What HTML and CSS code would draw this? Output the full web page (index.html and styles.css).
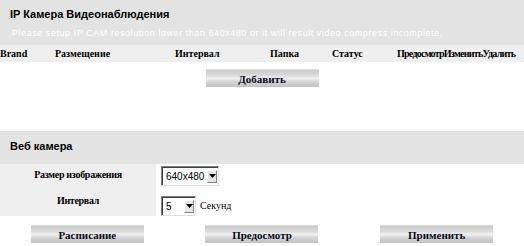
FILE: index.html
```html
<!DOCTYPE html>
<html lang="ru">
<head>
  <meta charset="UTF-8" />
  <title>IP Камера Видеонаблюдения</title>
  <link rel="stylesheet" href="styles.css">
</head>
<body>

  <div class="panel">
    <div class="panel-head">
      <h2>IP Камера Видеонаблюдения</h2>
      <p class="note">Please setup IP CAM resolution lower than 640x480 or it will result video compress incomplete.</p>
    </div>
    <div class="cam-head">
      <span>Brand</span>
      <span>Размещение</span>
      <span>Интервал</span>
      <span>Папка</span>
      <span>Статус</span>
      <span class="tight">Предосмотр</span>
      <span class="tight">Изменить</span>
      <span class="tight">Удалить</span>
    </div>
    <div class="actions one">
      <button class="btn">Добавить</button>
    </div>
  </div>

  <div class="panel webcam">
    <div class="panel-head short">
      <h2>Веб камера</h2>
    </div>
    <div class="form-grid">
      <div class="label">Размер изображения</div>
      <div class="field">
        <div class="select wide">
          <span class="value">640x480</span>
          <span class="arrow"><svg width="7" height="4" viewBox="0 0 7 4"><path d="M0 0h7L3.5 4z" fill="#000"/></svg></span>
        </div>
      </div>
      <div class="label">Интервал</div>
      <div class="field">
        <div class="select narrow">
          <span class="value">5</span>
          <span class="arrow"><svg width="7" height="4" viewBox="0 0 7 4"><path d="M0 0h7L3.5 4z" fill="#000"/></svg></span>
        </div>
        <span class="unit">Секунд</span>
      </div>
    </div>
    <div class="actions three">
      <button class="btn">Расписание</button>
      <button class="btn">Предосмотр</button>
      <button class="btn">Применить</button>
    </div>
  </div>

</body>
</html>
```

FILE: styles.css
```css
:root {
  --head: #e3e3e3;
  --row: #efefef;
  --text: #000;
}
* {
  margin: 0;
  padding: 0;
  box-sizing: border-box;
}
body {
  width: 524px;
  height: 246px;
  overflow: hidden;
  background: #fff;
  color: var(--text);
  font-family: 'Liberation Serif', serif;
}
.panel-head {
  background: var(--head);
  height: 45px;
  padding: 8px 10px 0;
}
.panel-head h2 {
  font-family: 'Liberation Sans', Arial, sans-serif;
  font-size: 11px;
  font-weight: 700;
  line-height: 13px;
}
.panel-head .note {
  color: #fff;
  font-family: 'Liberation Sans', Arial, sans-serif;
  font-size: 9px;
  letter-spacing: 0.55px;
  line-height: 11px;
  margin-top: 7px;
  padding-left: 2px;
  white-space: nowrap;
}
.panel-head.short {
  height: 33px;
  padding-top: 9px;
}
.cam-head {
  display: grid;
  grid-template-columns: 55px 120px 95px 62px 65px auto auto auto;
  justify-content: start;
  background: var(--row);
  height: 17px;
  font-size: 10px;
  font-weight: 700;
  line-height: 18px;
  white-space: nowrap;
}
.cam-head .tight {
  letter-spacing: -0.75px;
}
.actions {
  display: grid;
  justify-items: center;
}
.actions.one {
  margin-top: 7px;
}
.actions.three {
  grid-template-columns: 1fr 1fr 1fr;
  margin-top: 9px;
}
.btn {
  width: 113px;
  height: 18px;
  border: none;
  border-top: 1px solid #dcdcdc;
  background: linear-gradient(to bottom, #cbcbcb 0%, #dadada 30%, #f0f0f0 50%, #d4d4d4 70%, #c2c2c2 100%);
  font-family: 'Liberation Serif', serif;
  font-size: 11px;
  font-weight: 700;
  color: #0a0a1a;
  cursor: pointer;
}
.webcam {
  margin-top: 44px;
}
.form-grid {
  display: grid;
  grid-template-columns: 156px 1fr;
  grid-auto-rows: 26px;
}
.label {
  background: var(--row);
  font-size: 10px;
  font-weight: 700;
  letter-spacing: -0.3px;
  text-align: center;
  line-height: 18px;
  padding-top: 2px;
}
.field {
  display: flex;
  align-items: center;
  gap: 4px;
  padding-left: 5px;
}
.select {
  display: flex;
  align-items: center;
  justify-content: space-between;
  height: 20px;
  border: 1px solid;
  border-color: #7d7d7d #e0e0e0 #e0e0e0 #7d7d7d;
  box-shadow: inset 1px 1px 0 #404040;
  background: #fff;
  padding: 0 1px 0 4px;
  font-family: 'Liberation Sans', Arial, sans-serif;
  font-size: 10px;
}
.select.wide {
  width: 58px;
  margin-top: -2px;
}
.select.narrow {
  width: 35px;
  margin-top: 6px;
}
.arrow {
  display: flex;
  align-items: center;
  justify-content: center;
  width: 10px;
  height: 13px;
  background: #e6e6e6;
  border: 1px solid;
  border-color: #fff #808080 #808080 #fff;
}
.unit {
  font-size: 10px;
  margin-top: 4px;
}
```
